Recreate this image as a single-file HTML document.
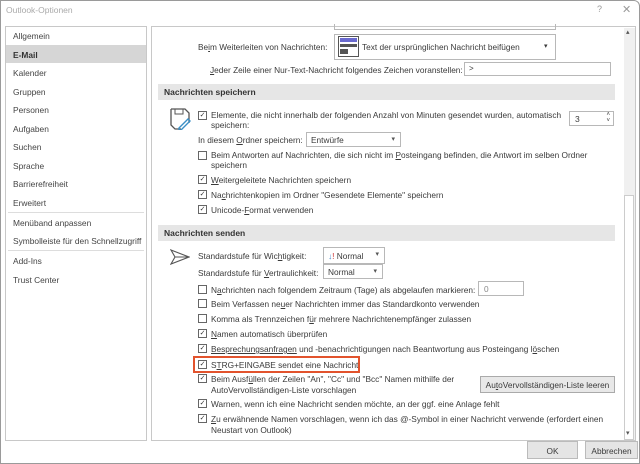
<!DOCTYPE html>
<html><head><meta charset="utf-8"><style>
*{box-sizing:border-box;margin:0;padding:0}
body{width:640px;height:464px;overflow:hidden;background:#fff;font-family:"Liberation Sans",sans-serif;font-size:8.3px;color:#3a3a3a;position:relative}
.a{position:absolute;white-space:nowrap}
.frame{position:absolute;left:0;top:0;width:640px;height:464px;border:1px solid #9a9a9a;border-radius:0 6px 0 0}
.panel{position:absolute;border:1px solid #c8c8c8}
.nav{left:13px;font-size:8.4px;color:#444}
.sec{position:absolute;left:158px;width:457px;height:16px;background:#e6e6e6;font-weight:bold;padding:3px 6px;font-size:8.5px;color:#333}
.cb{position:absolute;left:198px;width:9px;height:9px;border:1px solid #666;background:#fff;font-size:7px;line-height:7px;text-align:center;color:#333}
.t{position:absolute;left:211px;white-space:nowrap}
.box{position:absolute;border:1px solid #b8b8b8;background:#fff;padding:2px 4px}
.dd{position:absolute;border:1px solid #b8b8b8;background:#fff;padding:2px 4px}
.dd:after{content:"▾";position:absolute;right:5px;top:2px;font-size:7px;color:#555}
</style></head><body>
<div class="frame"></div>
<div class="a" style="left:6px;top:5px;color:#aaa;font-size:8.5px">Outlook-Optionen</div>
<div class="a" style="left:597px;top:4px;color:#999;font-size:9px">?</div>
<div class="a" style="left:622px;top:3px;color:#999;font-size:11px">✕</div>

<div class="panel" style="left:5px;top:26px;width:142px;height:415px"></div>
<div style="position:absolute;left:6px;top:45px;width:140px;height:18px;background:#d6d6d6"></div>
<div class="a nav" style="top:31px">Allgemein</div>
<div class="a nav" style="top:50px;font-weight:bold;color:#333">E-Mail</div>
<div class="a nav" style="top:68px">Kalender</div>
<div class="a nav" style="top:87px">Gruppen</div>
<div class="a nav" style="top:105px">Personen</div>
<div class="a nav" style="top:124px">Aufgaben</div>
<div class="a nav" style="top:142px">Suchen</div>
<div class="a nav" style="top:161px">Sprache</div>
<div class="a nav" style="top:179px">Barrierefreiheit</div>
<div class="a nav" style="top:198px">Erweitert</div>
<div style="position:absolute;left:8px;top:212px;width:136px;border-top:1px solid #ddd"></div>
<div class="a nav" style="top:218px">Menüband anpassen</div>
<div class="a nav" style="top:236px">Symbolleiste für den Schnellzugriff</div>
<div style="position:absolute;left:8px;top:250px;width:136px;border-top:1px solid #ddd"></div>
<div class="a nav" style="top:256px">Add-Ins</div>
<div class="a nav" style="top:275px">Trust Center</div>

<div class="panel" style="left:151px;top:26px;width:485px;height:415px"></div>
<div style="position:absolute;left:624px;top:28px;width:11px;height:412px;background:#f0f0f0"></div>
<div style="position:absolute;left:624px;top:195px;width:10px;height:245px;background:#fff;border:1px solid #ccc"></div>
<div class="a" style="left:626px;top:28px;font-size:7px;color:#555">▴</div>
<div class="a" style="left:626px;top:429px;font-size:7px;color:#555">▾</div>

<div style="position:absolute;left:334px;top:24px;width:222px;height:6px;border:1px solid #b8b8b8;border-top:none"></div>
<div class="a" style="left:198px;top:42px">Be<u>i</u>m Weiterleiten von Nachrichten:</div>
<div class="box" style="left:334px;top:34px;width:222px;height:26px"></div>
<div style="position:absolute;left:338px;top:36px;width:21px;height:21px;border:1px solid #555;background:#fff"></div>
<div style="position:absolute;left:340px;top:38px;width:17px;height:4px;background:#6a6acf"></div>
<div style="position:absolute;left:340px;top:44px;width:17px;height:3px;background:#555"></div>
<div style="position:absolute;left:340px;top:49px;width:8px;height:5px;background:#555"></div>
<div class="a" style="left:362px;top:42px">Text der ursprünglichen Nachricht beifügen</div>
<div class="a" style="left:544px;top:42px;font-size:7px">▾</div>
<div class="a" style="left:210px;top:65px"><u>J</u>eder Zeile einer Nur-Text-Nachricht folgendes Zeichen voranstellen:</div>
<div class="box" style="left:464px;top:62px;width:147px;height:14px;font-size:8px;padding:1px 4px">&gt;</div>

<div class="sec" style="top:84px">Nachrichten speichern</div>
<svg class="a" style="left:170px;top:108px" width="22" height="22" viewBox="0 0 22 22"><path d="M1 1h14l4 4v10M1 1v16l4 4h6" fill="none" stroke="#555" stroke-width="1.3"/><path d="M5 1v5h8V1" fill="none" stroke="#555"/><path d="M9 20l9-9 2 2-9 9H9z" fill="none" stroke="#3a8fc6" stroke-width="1.4"/></svg>
<div class="cb" style="top:111px">✓</div>
<div class="t" style="top:110px">Elemente, die nicht innerhalb der folgenden Anzahl von Minuten gesendet wurden, automatisch</div>
<div class="t" style="top:120px">speichern:</div>
<div class="box" style="left:569px;top:111px;width:45px;height:15px;font-size:8.5px;padding:2px 5px">3<span style="position:absolute;right:3px;top:0;font-size:6px;line-height:6px">˄<br>˅</span></div>
<div class="a" style="left:198px;top:135px">In diesem <u>O</u>rdner speichern:</div>
<div class="dd" style="left:306px;top:132px;width:95px;height:15px;padding:2px 4px">Entwürfe</div>
<div class="cb" style="top:151px"></div>
<div class="t" style="top:150px">Beim Antworten auf Nachrichten, die sich nicht im <u>P</u>osteingang befinden, die Antwort im selben Ordner</div>
<div class="t" style="top:160px">speichern</div>
<div class="cb" style="top:175px">✓</div><div class="t" style="top:175px"><u>W</u>eitergeleitete Nachrichten speichern</div>
<div class="cb" style="top:190px">✓</div><div class="t" style="top:190px">Na<u>c</u>hrichtenkopien im Ordner "Gesendete Elemente" speichern</div>
<div class="cb" style="top:205px">✓</div><div class="t" style="top:205px">Unicode-<u>F</u>ormat verwenden</div>

<div class="sec" style="top:225px">Nachrichten senden</div>
<svg class="a" style="left:170px;top:249px" width="20" height="16" viewBox="0 0 20 16"><path d="M1 1l18 7-18 7 4-7z M5 8h14" fill="none" stroke="#555" stroke-width="1.1"/></svg>
<div class="a" style="left:198px;top:251px">Standardstufe für Wic<u>h</u>tigkeit:</div>
<div class="dd" style="left:323px;top:247px;width:62px;height:17px;padding:3px 4px"><span style="color:#3a7fc6">↓</span><span style="color:#c33">!</span> Normal</div>
<div class="a" style="left:198px;top:268px">Standardstufe für <u>V</u>ertraulichkeit:</div>
<div class="dd" style="left:323px;top:264px;width:60px;height:15px;padding:2px 4px">Normal</div>
<div class="cb" style="top:285px"></div><div class="t" style="top:285px">N<u>a</u>chrichten nach folgendem Zeitraum (Tage) als abgelaufen markieren:</div>
<div class="box" style="left:478px;top:281px;width:46px;height:15px;padding:2px 5px;color:#888">0</div>
<div class="cb" style="top:299px"></div><div class="t" style="top:299px">Beim Verfassen ne<u>u</u>er Nachrichten immer das Standardkonto verwenden</div>
<div class="cb" style="top:314px"></div><div class="t" style="top:314px">Komma als Trennzeichen f<u>ü</u>r mehrere Nachrichtenempfänger zulassen</div>
<div class="cb" style="top:329px">✓</div><div class="t" style="top:329px"><u>N</u>amen automatisch überprüfen</div>
<div class="cb" style="top:344px">✓</div><div class="t" style="top:344px"><u>Besprechungsanfragen</u> und -benachrichtigungen nach Beantwortung aus Posteingang l<u>ö</u>schen</div>
<div class="cb" style="top:360px">✓</div><div class="t" style="top:360px">S<u>T</u>RG+EINGABE sendet eine Nachricht</div>
<div style="position:absolute;left:193px;top:356px;width:167px;height:17px;border:2px solid #e2532d"></div>
<div class="cb" style="top:374px">✓</div>
<div class="t" style="top:374px">Beim Ausf<u>ü</u>llen der Zeilen "An", "Cc" und "Bcc" Namen mithilfe der</div>
<div class="t" style="top:385px">AutoVervollständigen-Liste vorschlagen</div>
<div style="position:absolute;left:480px;top:376px;width:135px;height:17px;border:1px solid #aaa;background:#e8e8e8;text-align:center;padding-top:3px;white-space:nowrap">Au<u>t</u>oVervollständigen-Liste leeren</div>
<div class="cb" style="top:399px">✓</div><div class="t" style="top:399px">Warnen, wenn ich eine Nachricht senden möchte, an der ggf. eine Anlage fehlt</div>
<div class="cb" style="top:414px">✓</div>
<div class="t" style="top:414px"><u>Z</u>u erwähnende Namen vorschlagen, wenn ich das @-Symbol in einer Nachricht verwende (erfordert einen</div>
<div class="t" style="top:425px">Neustart von Outlook)</div>

<div style="position:absolute;left:527px;top:441px;width:51px;height:18px;border:1px solid #bbb;background:#e5e5e5;text-align:center;padding-top:4px">OK</div>
<div style="position:absolute;left:585px;top:441px;width:53px;height:18px;border:1px solid #bbb;background:#e5e5e5;text-align:center;padding-top:4px">Abbrechen</div>
</body></html>
